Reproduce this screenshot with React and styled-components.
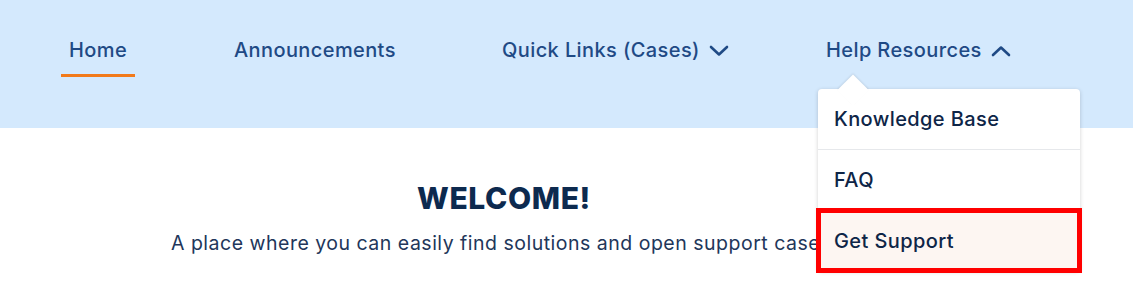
import React from "react";
import styled, { createGlobalStyle } from "styled-components";

const GlobalStyle = createGlobalStyle`
  html, body {
    margin: 0;
    padding: 0;
    background: #ffffff;
    font-family: Inter, "Open Sans", sans-serif;
  }
`;

const navItems = [
  { label: "Home", active: true },
  { label: "Announcements" },
  { label: "Quick Links (Cases)", chevron: "down" },
  { label: "Help Resources", chevron: "up", open: true },
];

const helpLinks = ["Knowledge Base", "FAQ", "Get Support"];

function Chevron({ dir }) {
  return (
    <svg width="20" height="12" viewBox="0 0 20 12" fill="none">
      <path
        d={dir === "up" ? "M2 10 L10 2.5 L18 10" : "M2 2 L10 9.5 L18 2"}
        stroke="#1f4a85"
        strokeWidth="2.6"
        strokeLinecap="round"
        strokeLinejoin="round"
      />
    </svg>
  );
}

export default function App() {
  return (
    <Page>
      <GlobalStyle />
      <Header>
        <Nav>
          {navItems.map((item) => (
            <NavCell key={item.label}>
              <NavItem $active={item.active}>
                <NavLabel>{item.label}</NavLabel>
                {item.chevron && <Chevron dir={item.chevron} />}
                {item.open && (
                  <Dropdown>
                    <Caret />
                    {helpLinks.map((link) => (
                      <DropdownLink key={link} $highlight={link === "Get Support"}>
                        {link}
                      </DropdownLink>
                    ))}
                  </Dropdown>
                )}
              </NavItem>
            </NavCell>
          ))}
        </Nav>
      </Header>
      <Main>
        <Title>WELCOME!</Title>
        <Subtitle>
          A place where you can easily find solutions and open support cases.
        </Subtitle>
      </Main>
    </Page>
  );
}

const Page = styled.div`
  width: 1133px;
  height: 294px;
  overflow: hidden;
  position: relative;
`;

const Header = styled.header`
  height: 128px;
  background-color: #d4e9fd;
`;

const Nav = styled.nav`
  display: grid;
  grid-template-columns: 165px 268px 324px auto;
  align-items: start;
  padding: 38px 0 0 61px;
`;

const NavCell = styled.div`
  display: flex;
`;

const NavItem = styled.div`
  position: relative;
  display: flex;
  align-items: flex-start;
  gap: 9px;
  height: 39px;
  padding: 0 8px;
  box-sizing: border-box;
  border-bottom: 3px solid ${({ $active }) => ($active ? "#f27a1a" : "transparent")};
  cursor: pointer;

  svg {
    margin-top: 7px;
  }
`;

const NavLabel = styled.span`
  font-size: 20px;
  line-height: 25px;
  letter-spacing: 0.4px;
  color: #1f4a85;
  font-weight: 500;
  white-space: nowrap;
`;

const Dropdown = styled.div`
  position: absolute;
  top: 51px;
  left: 0;
  width: 262px;
  background: #ffffff;
  border-radius: 4px;
  box-shadow: 0 1px 4px rgba(0, 0, 0, 0.18);
  display: flex;
  flex-direction: column;
  z-index: 5;
`;

const Caret = styled.div`
  position: absolute;
  top: -10px;
  left: 24px;
  width: 22px;
  height: 22px;
  background: #ffffff;
  transform: rotate(45deg);
  box-shadow: -1px -1px 2px rgba(0, 0, 0, 0.08);
`;

const DropdownLink = styled.a`
  position: relative;
  display: flex;
  align-items: center;
  height: 60px;
  padding: 0 16px;
  font-size: 20px;
  letter-spacing: 0.4px;
  font-weight: 500;
  color: #0e2547;
  white-space: nowrap;
  border-top: 1px solid #e6e8eb;
  background: ${({ $highlight }) => ($highlight ? "#fdf6f2" : "transparent")};
  outline: ${({ $highlight }) => ($highlight ? "5px solid #ff0000" : "none")};
  outline-offset: -3px;

  &:first-of-type {
    border-top: none;
  }
`;

const Main = styled.main`
  display: flex;
  flex-direction: column;
  align-items: center;
  width: 1008px;
  padding-top: 52px;
`;

const Title = styled.h1`
  margin: 0;
  font-size: 30px;
  line-height: 36px;
  letter-spacing: 0.6px;
  font-weight: 800;
  color: #0d2a4f;
`;

const Subtitle = styled.p`
  margin: 15px 0 0;
  font-size: 19.5px;
  line-height: 24px;
  letter-spacing: 0.5px;
  color: #22365a;
  white-space: nowrap;
`;
